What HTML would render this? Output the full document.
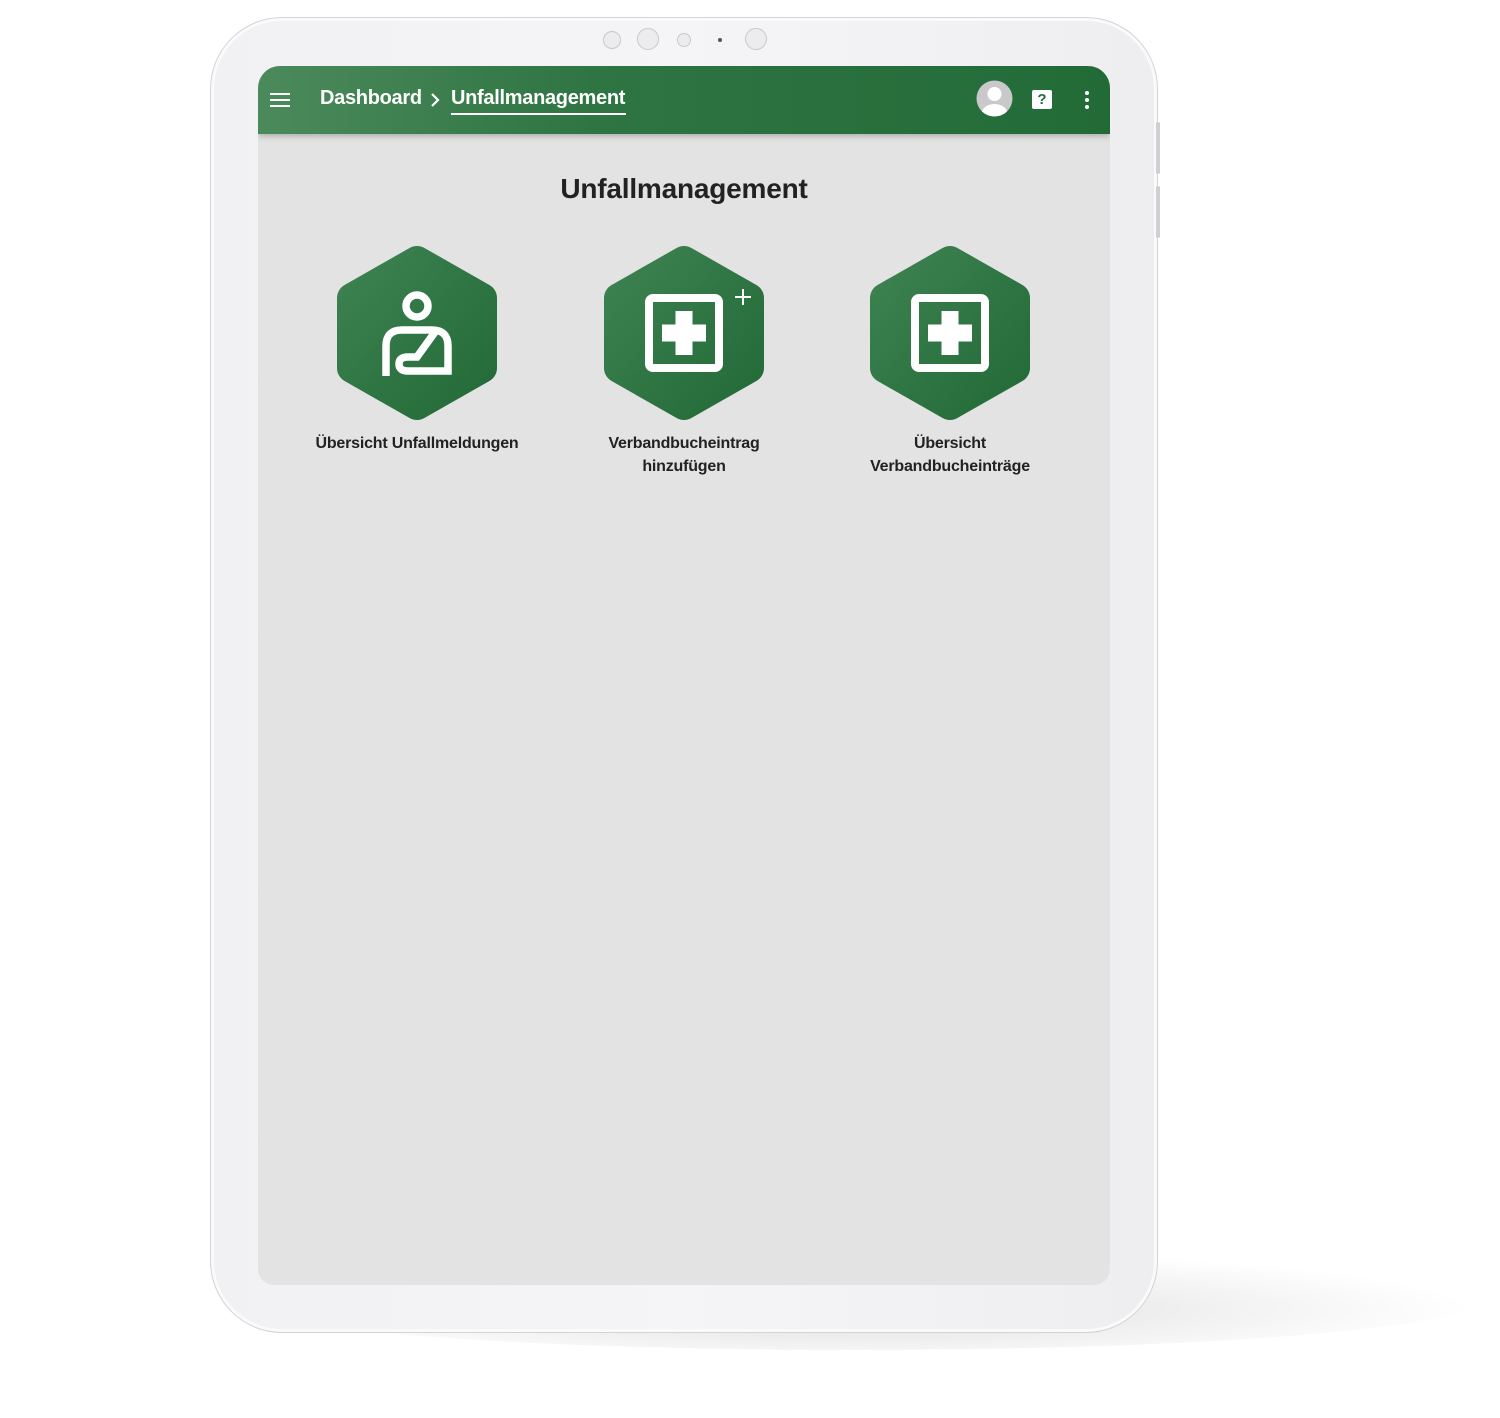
<!DOCTYPE html>
<html><head><meta charset="utf-8"><style>
body{margin:0;width:1500px;height:1418px;background:#fff;position:relative;overflow:hidden;font-family:"Liberation Sans",sans-serif}
.shadow{position:absolute;left:230px;top:1250px;width:1250px;height:100px;border-radius:50%;background:radial-gradient(ellipse at 50% 60%,rgba(0,0,0,0.13),rgba(0,0,0,0) 70%)}
.tab{position:absolute;left:210px;top:17px;width:946px;height:1314px;border-radius:72px;background:linear-gradient(90deg,#f1f1f3,#f5f5f7 50%,#eeeef0);border:1px solid #d4d4d8;box-shadow:inset 0 0 0 3px #fafafa}
.btn{position:absolute;left:1156px;width:4px;background:#d0d0d4;border-radius:2px}
.screen{position:absolute;left:258px;top:66px;width:852px;height:1219px;border-radius:22px 22px 16px 16px;background:#e3e3e3;overflow:hidden}
.hdr{position:absolute;left:0;top:0;width:852px;height:68px;background:linear-gradient(90deg,#4b8a5b,#2f7443 40%,#226b37);box-shadow:0 2px 6px rgba(0,0,0,.25)}
.cam{position:absolute;border-radius:50%;background:#ececee;border:1px solid #c8c8cc}
.t{position:absolute;color:#fff;font-weight:bold;font-size:20px;top:21px;letter-spacing:-0.3px}
.lbl{position:absolute;width:260px;text-align:center;font-weight:bold;font-size:16px;line-height:23px;color:#222;letter-spacing:-0.2px}
</style></head><body>
<div class="shadow"></div>
<div class="tab"></div>
<div class="btn" style="top:122px;height:52px"></div>
<div class="btn" style="top:186px;height:52px"></div>
<div class="cam" style="left:603px;top:31px;width:16px;height:16px"></div>
<div class="cam" style="left:637px;top:28px;width:20px;height:20px"></div>
<div class="cam" style="left:677px;top:33px;width:12px;height:12px"></div>
<div style="position:absolute;left:718px;top:38px;width:4px;height:4px;border-radius:50%;background:#555"></div>
<div class="cam" style="left:745px;top:28px;width:20px;height:20px"></div>
<div class="screen">
<div class="hdr">
 <div style="position:absolute;left:12px;top:27px;width:20px;height:2px;background:#fff;box-shadow:0 6px 0 #fff,0 12px 0 #fff"></div>
 <div class="t" style="left:62px">Dashboard</div>
 <svg style="position:absolute;left:171px;top:25px" width="12" height="18"><path d="M3 3l6 6-6 6" stroke="#fff" stroke-width="2.2" fill="none"/></svg>
 <div class="t" style="left:193px">Unfallmanagement</div>
 <div style="position:absolute;left:193px;top:47px;width:175px;height:2px;background:#fff"></div>
 <svg style="position:absolute;left:718px;top:14px" width="37" height="37"><defs><clipPath id="c"><circle cx="18.5" cy="18.5" r="18"/></clipPath></defs><circle cx="18.5" cy="18.5" r="18" fill="#c9c9cc"/><g clip-path="url(#c)" fill="#fff"><circle cx="18.5" cy="14" r="7"/><ellipse cx="18.5" cy="34" rx="13" ry="10"/></g></svg>
 <div style="position:absolute;left:774px;top:24px;width:20px;height:19px;background:#fff;border-radius:2px;color:#226b37;font-weight:bold;font-size:15px;text-align:center;line-height:19px">?</div>
 <div style="position:absolute;left:827px;top:25px;width:4px;height:4px;border-radius:50%;background:#fff;box-shadow:0 7px 0 #fff,0 14px 0 #fff"></div>
</div>
<div style="position:absolute;left:0;width:852px;top:107px;text-align:center;font-weight:bold;font-size:28px;color:#222;letter-spacing:-0.2px">Unfallmanagement</div>
</div>
<svg style="position:absolute;left:0;top:0" width="1500" height="1418">
<defs>
<linearGradient id="g" x1="0" y1="0" x2="1" y2="1"><stop offset="0" stop-color="#3d8150"/><stop offset="1" stop-color="#236b38"/></linearGradient>
<path id="hx" d="M0 -72 L65 -35 L65 35 L0 72 L-65 35 L-65 -35Z" fill="url(#g)" stroke="url(#g)" stroke-width="30" stroke-linejoin="round"/>
<g id="box"><rect x="-35" y="-35" width="70" height="70" rx="4" fill="none" stroke="#fff" stroke-width="8"/><rect x="-8.5" y="-22" width="17" height="44" fill="#fff"/><rect x="-22" y="-8.5" width="44" height="17" fill="#fff"/></g>
</defs>
<g transform="translate(417,333)"><use href="#hx"/>
<g fill="none" stroke="#fff" stroke-width="7.5"><circle cx="0" cy="-27" r="11"/>
<path d="M-31 43 V13 Q-31 -3 -15 -3 H15 Q31 -3 31 13 V38 H-9 Q-18 38 -18 31 Q-18 24 -9 24 H0 L18 -1"/></g></g>
<g transform="translate(684,333)"><use href="#hx"/><use href="#box"/><path d="M59 -44v16M51 -36h16" stroke="#fff" stroke-width="2"/></g>
<g transform="translate(950,333)"><use href="#hx"/><use href="#box"/></g>
</svg>
<div class="lbl" style="left:287px;top:432px">Übersicht Unfallmeldungen</div>
<div class="lbl" style="left:554px;top:432px">Verbandbucheintrag<br>hinzufügen</div>
<div class="lbl" style="left:820px;top:432px">Übersicht<br>Verbandbucheinträge</div>
</body></html>
